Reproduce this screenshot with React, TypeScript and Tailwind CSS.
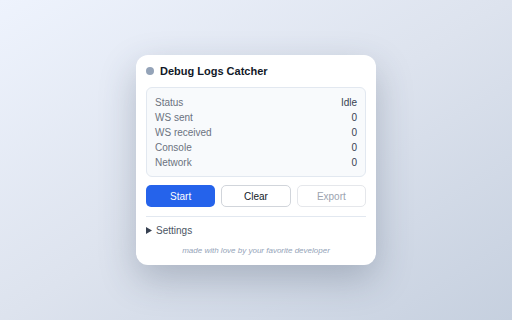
export default function App() {
  const stats = [
    { label: "Status", value: "Idle" },
    { label: "WS sent", value: "0" },
    { label: "WS received", value: "0" },
    { label: "Console", value: "0" },
    { label: "Network", value: "0" },
  ];

  return (
    <div
      className="flex h-[320px] w-full items-center justify-center bg-gradient-to-br from-[#eef3fd] via-[#dde3ee] to-[#c6d0df]"
      style={{ fontFamily: '"Liberation Sans", Arial, sans-serif' }}
    >
      <div className="w-[240px] rounded-[12px] bg-white px-[10px] pt-[10px] pb-[9px] shadow-[0_14px_36px_rgba(51,65,85,0.28)]">
        <div className="flex h-[12px] items-center gap-[6px]">
          <span className="h-[8px] w-[8px] rounded-full bg-[#94a3b8]" />
          <h1 className="text-[11px] leading-[12px] font-bold text-[#111827]">Debug Logs Catcher</h1>
        </div>

        <div className="mt-[10px] rounded-[6px] border border-[#e2e8f0] bg-[#f8fafc] px-[8px] pt-[7px] pb-[6px]">
          {stats.map((s) => (
            <div key={s.label} className="flex h-[15px] items-center justify-between text-[10px]">
              <span className="text-[#6b7280]">{s.label}</span>
              <span className="text-[#374151]">{s.value}</span>
            </div>
          ))}
        </div>

        <div className="mt-[8px] grid grid-cols-3 gap-[6px]">
          <button className="h-[22px] rounded-[5px] bg-[#2563eb] text-[10px] text-white">Start</button>
          <button className="h-[22px] rounded-[5px] border border-[#d1d5db] bg-white text-[10px] text-[#111827]">Clear</button>
          <button className="h-[22px] rounded-[5px] border border-[#e5e7eb] bg-white text-[10px] text-[#9ca3af]">Export</button>
        </div>

        <div className="mt-[9px] h-px bg-[#e2e8f0]" />

        <div className="mt-[7px] flex h-[12px] items-center gap-[4px] text-[10px] text-[#4b5563]">
          <svg width="6" height="7" viewBox="0 0 6 7" className="fill-[#374151]">
            <path d="M0 0L6 3.5L0 7Z" />
          </svg>
          <span>Settings</span>
        </div>

        <p className="mt-[10px] text-center text-[8px] leading-[10px] text-[#94a3b8] italic">
          made with love by your favorite developer
        </p>
      </div>
    </div>
  );
}
